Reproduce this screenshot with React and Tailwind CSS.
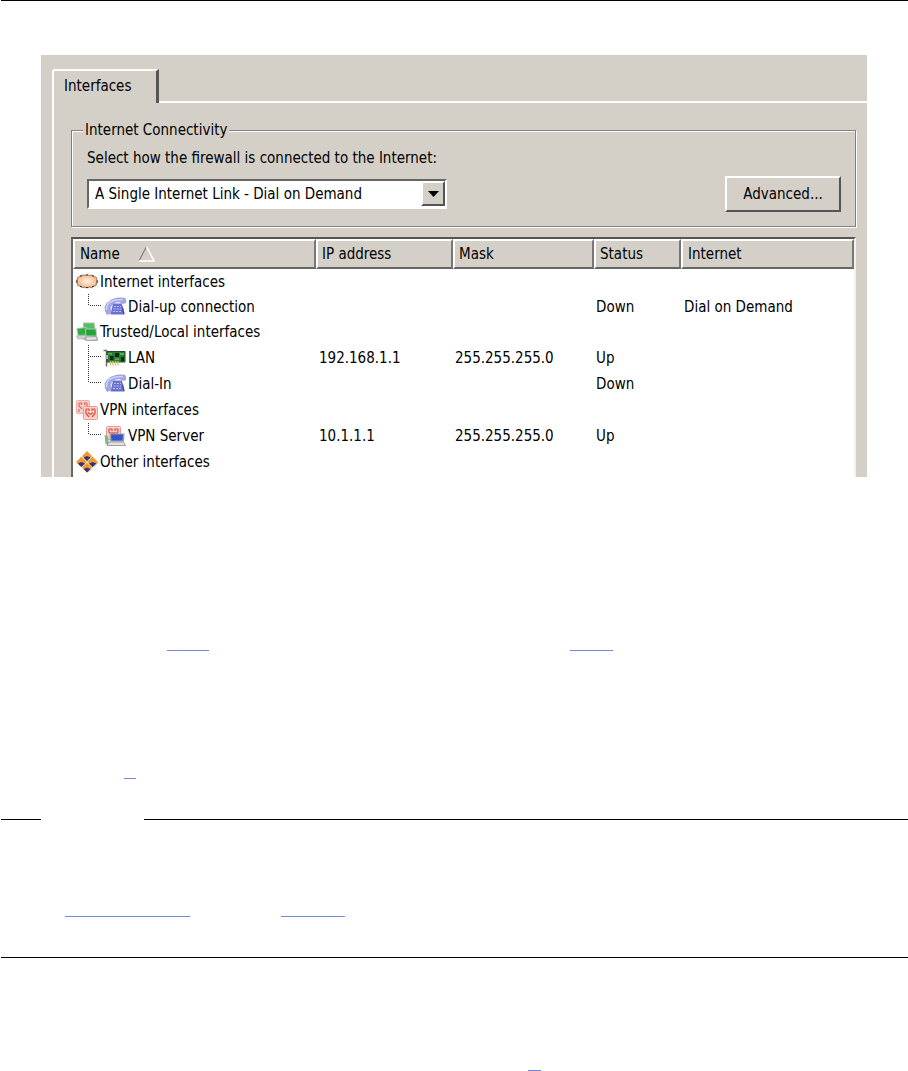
import React from 'react';
import clsx from 'clsx';

const InternetIcon = () => (
    <svg width="24" height="20" viewBox="0 0 24 20" className="shrink-0" aria-hidden="true">
        <defs>
            <radialGradient id="cloud">
                <stop offset="0" stopColor="#fff0e0" />
                <stop offset="1" stopColor="#f3b98a" />
            </radialGradient>
        </defs>
        <path
            d="M5 4.500Q7 2.500 9.500 3.500Q12 2 14.500 3.500Q17 2.500 19 4.500Q22 5 21.500 7Q23.500 9.500 21.500 11.500Q21.500 14 19 14Q17 16.500 14.500 15Q12 16.500 9.500 15Q7 16.500 5 14Q2 14 2.500 11.500Q0.500 9.500 2.500 7Q2 5 5 4.500Z"
            fill="url(#cloud)"
            stroke="#a08b7e"
            strokeWidth="1.200"
        />
        <path d="M5 4H7M11 3H13M17 4H19M5 14.500H7M11 15.500H13M17 14.500H19M2 8.500V10.500M22 8.500V10.500" stroke="#4d3527" strokeWidth="1.200" />
    </svg>
);

const PhoneIcon = () => (
    <svg width="24" height="20" viewBox="0 0 24 20" className="shrink-0" aria-hidden="true">
        {/* body */}
        <path d="M10 6.500H18.500L20 10L21.500 17.500H7.500L9 11Z" fill="#6a71cf" />
        <path d="M11 9.500H18M10.500 12H18.500M10 14.500H19" stroke="#b9bef2" strokeWidth="1.200" strokeDasharray="2 1" />
        <path d="M19.500 11L21 17" stroke="#4047a5" strokeWidth="1.200" />
        {/* handset */}
        <path d="M8 3Q14 0 21.500 1Q23 1.500 22.500 6L18.500 6.500L17.500 5Q13 4 10.500 6.500Q7 9 7.500 12.500L8 16L4 17.500Q1.500 14 2 9.500Q4 5 8 3Z" fill="#a0a6e6" stroke="#8a91dc" strokeWidth="0.600" />
        <path d="M3.500 13Q3 7 8 4.500Q13 2 20 2.500" fill="none" stroke="#ced2f7" strokeWidth="1.500" />
    </svg>
);

const LocalIcon = () => (
    <svg width="24" height="20" viewBox="0 0 24 20" className="shrink-0" aria-hidden="true">
        <path d="M3 15L10 18.500L22.500 19V15Z" fill="#bdbdbd" />
        {/* back monitor */}
        <path d="M8 0.500H19.500L21 10H8Z" fill="#b4bab4" />
        <path d="M9 1.500H18.500L19.500 8H9Z" fill="#4fc05b" />
        {/* left monitor */}
        <path d="M1.500 6L12 5L13 13.500L2.500 14Z" fill="#b9c0b9" />
        <path d="M2.500 7L11.500 6L12 12.500L3.500 13Z" fill="#2fae40" />
        <path d="M1.500 14L11 13.500L11.500 16.500L3 17Z" fill="#d4d4d4" stroke="#9d9d9d" strokeWidth="0.600" />
        {/* front monitor */}
        <path d="M10 6.500H21.500L22 14.500H10.500Z" fill="#b9c0b9" />
        <path d="M11 7.500H20.500L21 13.500H11.500Z" fill="#1fa437" />
        <path d="M10.500 15L21.500 14.500L22.500 18L11.500 18.500Z" fill="#e4e4e4" stroke="#919191" strokeWidth="0.800" />
    </svg>
);

const LanIcon = () => (
    <svg width="24" height="20" viewBox="0 0 24 20" className="shrink-0" aria-hidden="true">
        <path d="M0.500 2.500H3.500V18.500" fill="none" stroke="#6f6f6f" strokeWidth="1.500" />
        <path d="M4 3.500H22V14H4Z" fill="#2b7a35" stroke="#1b4f22" strokeWidth="1" />
        <path d="M7 8H10.500V12H7ZM12 5H16V9H12ZM18 9H21V13H18Z" fill="#0c2b11" />
        <path d="M5 5H9V6.500H5ZM17 5H21V7H17ZM12 10.500H16V12H12Z" fill="#5eae5c" />
        <path d="M7.500 13V17.500M10 13V17.500M12.500 13V17.500M15 13V17.500" stroke="#d8c75a" strokeWidth="1.400" />
        <path d="M2.500 7H5V11H2.500Z" fill="#a9b8ab" />
    </svg>
);

const VpnIcon = () => (
    <svg width="24" height="20" viewBox="0 0 24 20" className="shrink-0" aria-hidden="true">
        <rect x="1.500" y="0.500" width="13" height="13" rx="1" fill="#f8d0ca" stroke="#f2aca5" />
        <path d="M4 3V6L7 9M4 3H6.500V5M12 3V6L9 9M12 3H9.500V5M4 9V12" fill="none" stroke="#e2695f" strokeWidth="1.200" />
        <rect x="8.500" y="6.500" width="14" height="13" rx="1" fill="#f9d3ce" stroke="#ee9991" />
        <path d="M11 9V13.500L14 17M11 9H14V11M20 9V13.500L17 17M20 9H17V11M13 12.500L15.500 14.500L18 12.500" fill="none" stroke="#dd4a40" strokeWidth="1.200" />
    </svg>
);

const VpnServerIcon = () => (
    <svg width="24" height="20" viewBox="0 0 24 20" className="shrink-0" aria-hidden="true">
        <rect x="3.500" y="0.500" width="14" height="13" rx="1" fill="#f9d3ce" stroke="#ee9991" />
        <path d="M6 3V6L8 8M6 3H9V5M15 3V6L13 8M15 3H12V5M8.500 6L10.500 8L12.500 6" fill="none" stroke="#dd4a40" strokeWidth="1.200" />
        <path d="M1.500 9L5 10L6 19L2.500 18Z" fill="#7cb98a" />
        <path d="M6.500 7.500H21.500L21 15.500H7Z" fill="#9aa2b4" />
        <path d="M8 8.500H20L19.500 14.500H8.500Z" fill="#3556c8" />
        <path d="M6 16H20.500L22.500 19.500H4Z" fill="#e3e3e3" stroke="#8a8a8a" strokeWidth="0.800" />
    </svg>
);

const OtherIcon = () => (
    <svg width="24" height="22" viewBox="0 0 24 22" className="shrink-0" aria-hidden="true">
        <path d="M14 3L23.500 12L14 21.500L5 13Z" fill="#dedede" />
        <path d="M12 0L17 5L12 10L7 5ZM6.500 5.500L11.500 11L6.500 16L1 11ZM17.500 5.500L23 11L17.500 16L12.500 11ZM12 12L17 16.500L12 21.500L7 16.500Z" fill="#f09a35" />
        <path d="M8.500 6.500L12 5L15.500 6.500L12 10ZM2.500 12.500L6.500 11L10 12.500L6.500 16ZM14 12.500L17.500 11L21.500 12.500L17.500 16ZM8.500 18L12 16.500L15.500 18L12 21.500Z" fill="#3d3566" />
    </svg>
);

// dotted connector in front of a child row
const Branch = ({ last }) => (
    <svg width="28" height="26" viewBox="0 0 28 26" className="shrink-0" shapeRendering="crispEdges" aria-hidden="true">
        <path
            d={last ? 'M13.500 0V12M15 11.500H26' : 'M13.500 0V26M15 11.500H26'}
            fill="none"
            stroke="#333"
            strokeDasharray="1 1"
        />
    </svg>
);

const columns = [
    { name: 'Name', cell: 'w-[243px]', pad: 'pl-[5px]', sorted: true },
    { name: 'IP address', cell: 'w-[137px]', pad: 'pl-[4px]' },
    { name: 'Mask', cell: 'w-[141px]', pad: 'pl-[4px]' },
    { name: 'Status', cell: 'w-[87px]', pad: 'pl-[4px]' },
    { name: 'Internet', cell: '', pad: 'pl-[5px]' },
];

const rows = [
    { name: 'Internet interfaces', icon: InternetIcon, short: true },
    { name: 'Dial-up connection', icon: PhoneIcon, child: true, last: true, short: true, status: 'Down', internet: 'Dial on Demand' },
    { name: 'Trusted/Local interfaces', icon: LocalIcon },
    { name: 'LAN', icon: LanIcon, child: true, ip: '192.168.1.1', mask: '255.255.255.0', status: 'Up' },
    { name: 'Dial-In', icon: PhoneIcon, child: true, last: true, status: 'Down' },
    { name: 'VPN interfaces', icon: VpnIcon },
    { name: 'VPN Server', icon: VpnServerIcon, child: true, last: true, ip: '10.1.1.1', mask: '255.255.255.0', status: 'Up' },
    { name: 'Other interfaces', icon: OtherIcon },
];

const InterfaceTable = () => (
    <div className="h-[240px] overflow-hidden border-t-2 border-x-2 border-t-[#555] border-l-[#666] border-r-[#f4f2ee] bg-white">
        <table className="w-full table-fixed border-collapse leading-5">
            <thead>
                <tr>
                    {columns.map((col) => (
                        <th key={col.name} className={clsx('h-[30px] p-0 font-normal text-left', col.cell)}>
                            <div
                                className={clsx(
                                    'flex h-[30px] items-center border-2 border-t-white border-l-white border-r-[#777] border-b-[#666] bg-[#d4d0c8]',
                                    col.pad
                                )}
                            >
                                {col.name}
                                {col.sorted && (
                                    <svg width="18" height="18" viewBox="0 0 18 18" className="ml-[18px]" aria-hidden="true">
                                        <path d="M1 16L8.500 1.500" stroke="#808080" strokeWidth="1.200" />
                                        <path d="M8.500 1.500L16 16H1" fill="none" stroke="#fff" strokeWidth="1.500" />
                                    </svg>
                                )}
                            </div>
                        </th>
                    ))}
                </tr>
            </thead>
            <tbody>
                {rows.map((row) => {
                    const Icon = row.icon;
                    return (
                        <tr key={row.name} className={row.short ? 'h-[25px]' : 'h-[26px]'}>
                            <td className="p-0">
                                <div className={clsx('flex items-center pl-[2px]', row.short ? 'h-[25px]' : 'h-[26px]')}>
                                    {row.child && <Branch last={row.last} />}
                                    <Icon />
                                    <span className="ml-px whitespace-nowrap">{row.name}</span>
                                </div>
                            </td>
                            <td className="py-0 pl-[3px]">{row.ip}</td>
                            <td className="py-0 pl-[2px]">{row.mask}</td>
                            <td className="py-0 pl-[2px]">{row.status}</td>
                            <td className="py-0 pl-[3px]">{row.internet}</td>
                        </tr>
                    );
                })}
            </tbody>
        </table>
    </div>
);

const Connectivity = () => (
    <fieldset className="h-[107px] border border-[#808080] pr-[14px] pl-[15px] shadow-[1px_1px_0_#fff,inset_1px_1px_0_#fff]">
        <legend className="-ml-[4px] bg-[#d4d0c8] px-[2px] leading-5">Internet Connectivity</legend>
        <label htmlFor="link" className="mt-[8px] block leading-5">
            Select how the firewall is connected to the Internet:
        </label>
        <div className="flex items-start justify-between">
            <div className="relative mt-[11px] w-[360px]">
                <select
                    id="link"
                    className="block h-[30px] w-full appearance-none border-2 border-t-[#666] border-l-[#666] border-r-white border-b-white bg-white pl-[6px] leading-5"
                >
                    <option>A Single Internet Link - Dial on Demand</option>
                </select>
                <span className="pointer-events-none absolute top-[2px] right-[2px] flex h-[25px] w-6 items-center justify-center border-2 border-t-white border-l-white border-r-[#555] border-b-[#555] bg-[#d4d0c8]">
                    <svg width="11" height="6" viewBox="0 0 11 6" aria-hidden="true">
                        <path d="M0 0H11L5.500 6Z" fill="#000" />
                    </svg>
                </span>
            </div>
            <button
                type="button"
                className="mt-[8px] h-9 w-[116px] border-2 border-t-white border-l-white border-r-[#555] border-b-[#555] bg-[#d4d0c8]"
            >
                Advanced...
            </button>
        </div>
    </fieldset>
);

const InterfacesPanel = () => (
    <section className="h-[422px] overflow-hidden bg-[#d4d0c8] pt-[14px] pl-[11px] text-[15px] text-black">
        <div className="flex">
            <button
                type="button"
                className="h-[34px] w-[107px] rounded-tl-[3px] border-t-2 border-l-2 border-r-[3px] border-t-white border-l-white border-r-[#555] pb-[2px] pl-[10px] text-left"
            >
                Interfaces
            </button>
            <div className="flex-1 border-b-2 border-white" />
        </div>
        <div className="border-l-2 border-white pt-[17px] pr-[11px] pl-[17px]">
            <Connectivity />
            <div className="mt-[10px]">
                <InterfaceTable />
            </div>
        </div>
    </section>
);

const LinkRule = ({ className }) => <a href="#" className={clsx('block h-px bg-[#7189d9]', className)} />;

export default function App() {
    return (
        <main className="min-h-screen bg-white pl-px font-['DejaVu_Sans_Condensed',Tahoma,sans-serif]">
            <hr className="border-t border-black" />
            <div className="mt-[54px] mr-[41px] ml-10">
                <InterfacesPanel />
            </div>

            <div className="mt-[173px] flex">
                <LinkRule className="ml-[166px] w-[42px]" />
                <LinkRule className="ml-[361px] w-[43px]" />
            </div>
            <div className="mt-[127px] flex">
                <LinkRule className="ml-[123px] w-3" />
            </div>

            <div className="mt-[40px] flex">
                <div className="h-px w-10 bg-black" />
                <div className="ml-[103px] h-px flex-1 bg-black" />
            </div>
            <div className="mt-[96px] flex">
                <LinkRule className="ml-16 w-[125px]" />
                <LinkRule className="ml-[91px] w-16" />
            </div>
            <hr className="mt-[40px] border-t border-black" />
            <div className="mt-[112px] flex">
                <LinkRule className="ml-[527px] w-[13px]" />
            </div>
        </main>
    );
}
